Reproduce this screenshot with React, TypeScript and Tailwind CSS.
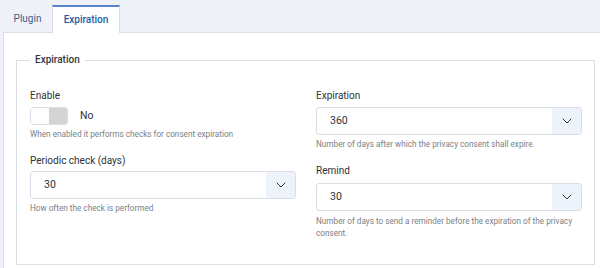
import React from "react";

function Chevron() {
  return (
    <svg width="10" height="6" viewBox="0 0 10 6" fill="none">
      <path d="M1 1l4 4 4-4" stroke="#33383d" strokeWidth="1" strokeLinecap="round" strokeLinejoin="round" />
    </svg>
  );
}

function Select({ value }: { value: string }) {
  return (
    <div className="flex h-[28px] w-[266px] overflow-hidden rounded-[3px] border border-[#d8dde6] bg-white">
      <div className="flex flex-1 items-center pl-[13px] text-[10.5px] text-[#2e3338]">{value}</div>
      <div className="flex w-[29px] items-center justify-center bg-[#eef2fa]">
        <Chevron />
      </div>
    </div>
  );
}

function Label({ children }: { children: React.ReactNode }) {
  return <div className="h-[18px] leading-[18px] text-[10px] text-[#2e3338]">{children}</div>;
}

function Help({ children }: { children: React.ReactNode }) {
  return <div className="text-[8.2px] leading-[12px] text-[#7a7f85]">{children}</div>;
}

export default function App() {
  return (
    <div className="h-[268px] w-[600px] overflow-hidden bg-[#eef2f8] pl-[3px] font-['Roboto',sans-serif]">
      <div className="flex h-[32px] items-end">
        <div className="flex h-[26px] w-[49px] items-center justify-center pb-[2px] text-[10px] text-[#3a5f8f]">Plugin</div>
        <div className="relative z-10 -mb-px flex h-[28px] w-[68px] items-center justify-center border-x border-t-2 border-x-[#d9dee7] border-t-[#5585c8] bg-white pb-[1px] text-[10px] font-medium text-[#1d5ba6]">
          Expiration
        </div>
      </div>
      <div className="h-[240px] border-l border-t border-[#d9dee7] bg-white pl-[12px] pt-[20px]">
        <fieldset className="h-[212px] w-[578px] border border-[#d9dee7] pl-[13px] pr-[12px]">
          <legend className="px-[5px] text-[10px] font-medium leading-[14px] text-[#33383d]">Expiration</legend>
          <div className="mt-[20px] grid grid-cols-[266px_266px] gap-x-[20px]">
            <div className="flex flex-col">
              <Label>Enable</Label>
              <div className="mt-[2px] flex items-center">
                <div className="flex h-[18px] w-[38px] overflow-hidden rounded-[3px] border border-[#d8dde6]">
                  <div className="flex-1 bg-white" />
                  <div className="flex-1 bg-[#d4d4d4]" />
                </div>
                <span className="ml-[12px] text-[10.5px] text-[#2e3338]">No</span>
              </div>
              <div className="mt-[3px]">
                <Help>When enabled it performs checks for consent expiration</Help>
              </div>
              <div className="mt-[12px]">
                <Label>Periodic check (days)</Label>
              </div>
              <div className="mt-[1px]">
                <Select value="30" />
              </div>
              <div className="mt-[3px]">
                <Help>How often the check is performed</Help>
              </div>
            </div>
            <div className="flex flex-col">
              <Label>Expiration</Label>
              <div className="mt-[2px]">
                <Select value="360" />
              </div>
              <div className="mt-[3px]">
                <Help>Number of days after which the privacy consent shall expire.</Help>
              </div>
              <div className="mt-[12px]">
                <Label>Remind</Label>
              </div>
              <div className="mt-[3px]">
                <Select value="30" />
              </div>
              <div className="mt-[4px]">
                <Help>Number of days to send a reminder before the expiration of the privacy consent.</Help>
              </div>
            </div>
          </div>
        </fieldset>
      </div>
    </div>
  );
}
